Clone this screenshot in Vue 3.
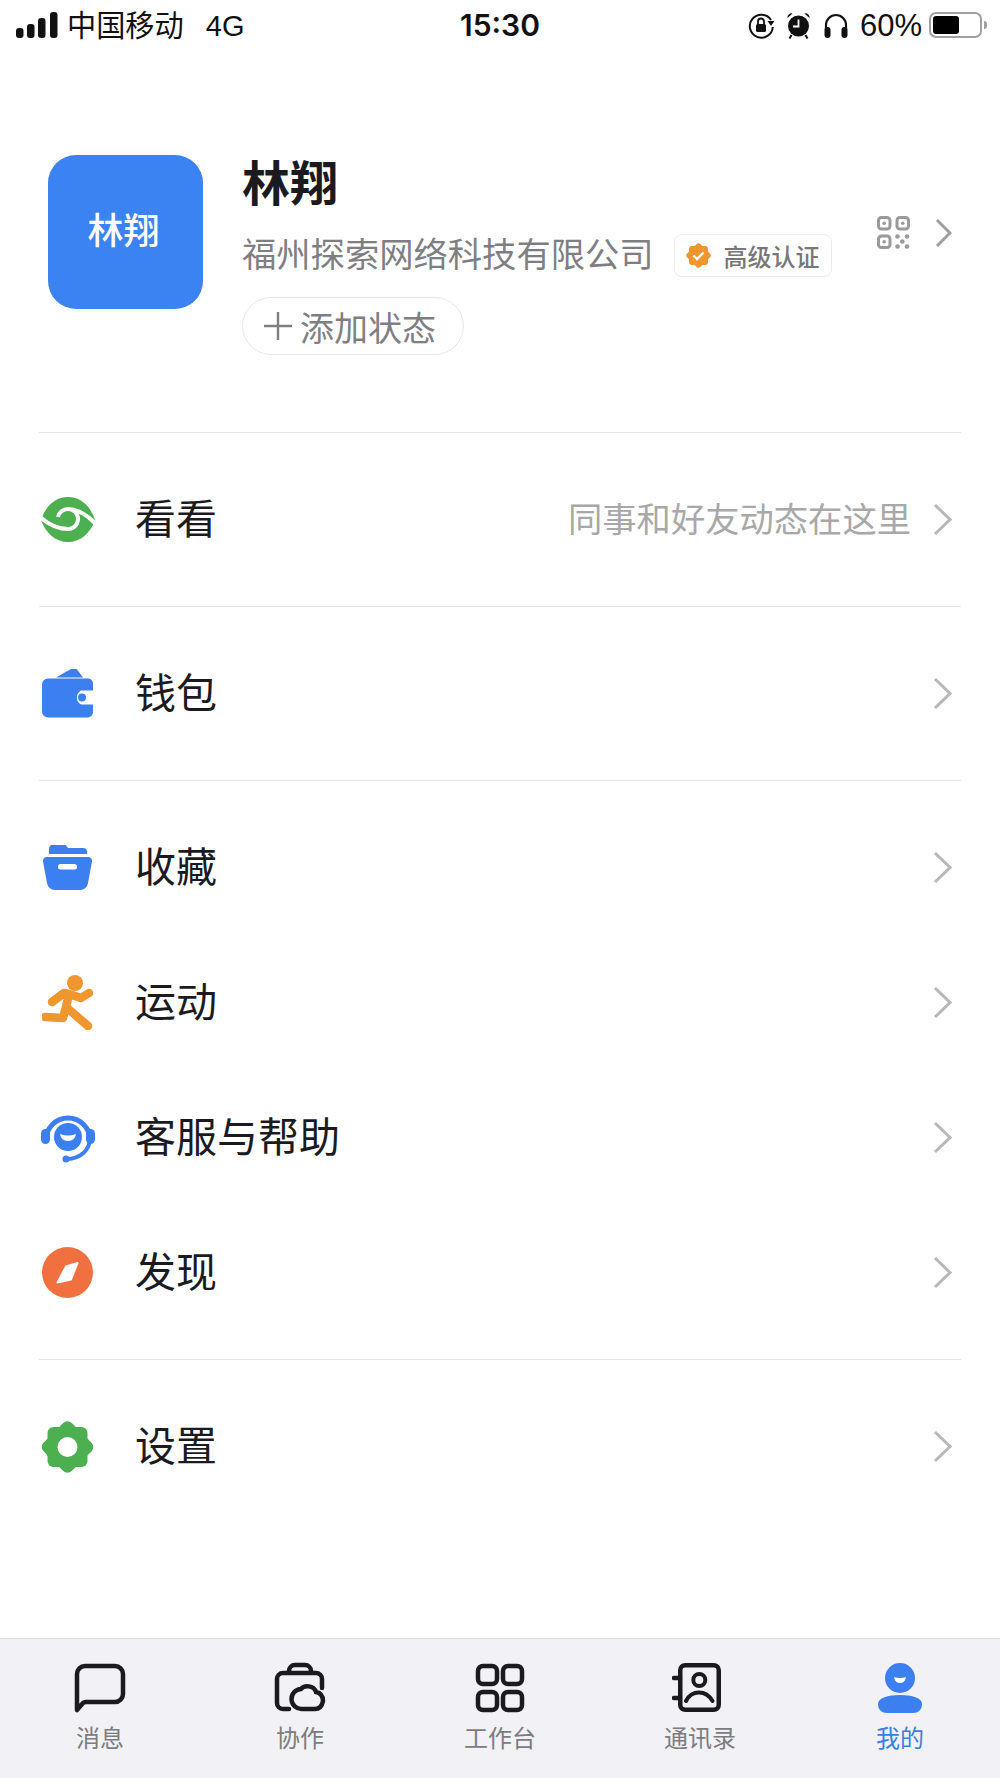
<template>
  <div class="page">
    <div class="status-bar">
      <div class="status-left">
        <svg class="signal" width="42" height="26" viewBox="0 0 42 26">
          <rect x="0" y="16" width="7.5" height="10" rx="3" />
          <rect x="11" y="12" width="7.5" height="14" rx="3" />
          <rect x="22" y="6" width="7.5" height="20" rx="3" />
          <rect x="34" y="0" width="7.5" height="26" rx="3" />
        </svg>
        <span class="carrier">中国移动</span>
        <span class="network">4G</span>
      </div>
      <div class="status-time">15:30</div>
      <div class="status-right">
        <svg width="27" height="27" viewBox="0 0 27 27">
          <path d="M23 8A11.5 11.5 0 1 0 24.8 15" fill="none" stroke="#111" stroke-width="2" />
          <path d="M19.5 9h7l-3.5 5z" fill="#111" />
          <rect x="8" y="12" width="10" height="8" rx="1.5" fill="#111" />
          <path d="M10 12V9.5a3 3 0 0 1 6 0V12" fill="none" stroke="#111" stroke-width="1.8" />
        </svg>
        <svg class="alarm" width="25" height="27" viewBox="0 0 24 27">
          <circle cx="12" cy="14" r="10.5" fill="#111" />
          <path d="M1 6a4 4 0 0 1 5-4.500zM23 6a4 4 0 0 0-5-4.500z" fill="#111" />
          <path d="M5 23l-2 3.500M19 23l2 3.500" stroke="#111" stroke-width="2" />
          <path d="M12 7.500V14.500H6.500" fill="none" stroke="#fff" stroke-width="1.800" />
        </svg>
        <svg class="headphones" width="24" height="25" viewBox="0 0 24 25">
          <path d="M2 17V12a10 10 0 0 1 20 0v5" fill="none" stroke="#111" stroke-width="2.200" />
          <rect x="0.500" y="14" width="6" height="11" rx="3" fill="#111" />
          <rect x="17.500" y="14" width="6" height="11" rx="3" fill="#111" />
        </svg>
        <span class="percent">60%</span>
        <div class="battery"><div class="battery-level"></div></div>
        <div class="battery-nub"></div>
      </div>
    </div>

    <div class="profile">
      <div class="avatar"><span>林翔</span></div>
      <div class="profile-info">
        <div class="name">林翔</div>
        <div class="company-row">
          <span class="company">福州探索网络科技有限公司</span>
          <span class="badge">
            <svg width="25" height="25" viewBox="0 0 25 25">
              <g fill="#f0962f">
                <rect x="3" y="3" width="19" height="19" rx="3" />
                <rect x="3" y="3" width="19" height="19" rx="3" transform="rotate(45 12.500 12.500)" />
              </g>
              <path d="M7.500 12.500l3.500 3.500 6.500-6.500" fill="none" stroke="#fff" stroke-width="2.400" />
            </svg>
            <span>高级认证</span>
          </span>
        </div>
        <div class="status-pill">
          <svg width="28" height="28" viewBox="0 0 28 28">
            <path d="M14 0v28M0 14h28" stroke="#7f7f83" stroke-width="2.400" />
          </svg>
          <span>添加状态</span>
        </div>
      </div>
      <div class="profile-actions">
        <svg width="33" height="33" viewBox="0 0 33 33">
          <g fill="none" stroke="#9a9a9a" stroke-width="3">
            <rect x="1.500" y="1.500" width="11.500" height="11.500" rx="3" />
            <rect x="20" y="1.500" width="11.500" height="11.500" rx="3" />
            <rect x="1.500" y="20" width="11.500" height="11.500" rx="3" />
          </g>
          <g fill="#9a9a9a">
            <circle cx="7.200" cy="7.200" r="1.800" />
            <circle cx="25.800" cy="7.200" r="1.800" />
            <circle cx="7.200" cy="25.800" r="1.800" />
            <circle cx="20.500" cy="20.500" r="2.300" />
            <circle cx="30" cy="20.500" r="2.300" />
            <circle cx="25.300" cy="25.500" r="2.300" />
            <circle cx="20.500" cy="30.500" r="2.300" />
            <circle cx="30" cy="30.500" r="2.300" />
          </g>
        </svg>
        <svg class="chevron" width="17" height="30" viewBox="0 0 17 30">
          <path d="M2 2l13 13L2 28" fill="none" stroke="#9f9f9f" stroke-width="3" />
        </svg>
      </div>
    </div>

    <div class="menu">
      <div v-for="(group, i) in groups" :key="i" class="menu-group">
        <div v-for="item in group" :key="item.label" class="menu-row">
          <div class="menu-icon">
            <svg v-if="item.icon === 'eye'" width="54" height="45" viewBox="0 0 54 45">
              <path d="M0 23C5 8 15 0 27 0s22 8 27 23c-5 14-15 22-27 22S5 37 0 23z" fill="#4caf50" />
              <path d="M-1 20C7 27 16 32 27 32a10 10 0 0 0 0-20C36 12 46 18 55 27" fill="none" stroke="#fff" stroke-width="4" />
              <path d="M27 12a10 10 0 0 0-10 8" fill="none" stroke="#fff" stroke-width="4" />
              <circle cx="27" cy="22" r="5" fill="#4caf50" />
            </svg>
            <svg v-else-if="item.icon === 'wallet'" width="51" height="49" viewBox="0 1.500 51 49">
              <path d="M14 10L29 1.500c2.500-1.500 5-1 6.500 1L41 10z" fill="#3b7ff0" />
              <path d="M6 11h40a5 5 0 0 1 5 5v7H39a8 8 0 0 0 0 14h12v7a6 6 0 0 1-5 6H6a6 6 0 0 1-6-6V17a6 6 0 0 1 6-6z" fill="#3b7ff0" />
              <circle cx="40" cy="30" r="4" fill="#3b7ff0" />
            </svg>
            <svg v-else-if="item.icon === 'folder'" width="49" height="46" viewBox="0 1 49 46">
              <path d="M6 10V5a5 5 0 0 1 5-5h8c3 0 4 1 6 4h15a4 4 0 0 1 4 4v2z" fill="#3b7ff0" />
              <path d="M4 13h41a4 4 0 0 1 4 4.500L45 39a8 8 0 0 1-8 7H12a8 8 0 0 1-8-7L0 17.500A4 4 0 0 1 4 13z" fill="#3b7ff0" />
              <rect x="15" y="20" width="19" height="5.500" rx="2.500" fill="#fff" />
            </svg>
            <svg v-else-if="item.icon === 'run'" width="51" height="55" viewBox="0 0 51 55">
              <circle cx="33" cy="8" r="8" fill="#f0962f" />
              <path d="M10 27L22 18L27 19L39 23L47 18M27 19L24 32M3 42L21 43L24 32L46 51" fill="none" stroke="#f0962f" stroke-width="8.500" stroke-linecap="round" stroke-linejoin="round" />
            </svg>
            <svg v-else-if="item.icon === 'support'" width="54" height="51" viewBox="0 0 54 51">
              <path d="M5 28a22 22 0 0 1 44 0" fill="none" stroke="#3b7ff0" stroke-width="5" />
              <path d="M49 26c0 12-10 21-23 21" fill="none" stroke="#3b7ff0" stroke-width="4" stroke-linecap="round" />
              <circle cx="27" cy="25" r="14" fill="#3b7ff0" />
              <path d="M19 22q8 3 16 0q-1 7-8 7q-7 0-8-7z" fill="#fff" />
              <rect x="0" y="17" width="9" height="15" rx="4.500" fill="#3b7ff0" />
              <rect x="45" y="17" width="9" height="15" rx="4.500" fill="#3b7ff0" />
              <circle cx="25" cy="47" r="3.500" fill="#3b7ff0" />
            </svg>
            <svg v-else-if="item.icon === 'compass'" width="51" height="51" viewBox="0 0 51 51">
              <circle cx="25.500" cy="25.500" r="25.500" fill="#f1703f" />
              <path d="M35.500 16L24 19.500L15.500 35.500L29 32.500Z" fill="#fff" stroke="#fff" stroke-width="2" stroke-linejoin="round" />
            </svg>
            <svg v-else-if="item.icon === 'gear'" width="53" height="52" viewBox="0 0 53 52">
              <g fill="#4caf50">
                <rect x="6.500" y="6" width="40" height="40" rx="6" />
                <rect x="6.500" y="6" width="40" height="40" rx="6" transform="rotate(45 26.500 26)" />
              </g>
              <circle cx="26.500" cy="26" r="10" fill="#fff" />
            </svg>
          </div>
          <span class="menu-label">{{ item.label }}</span>
          <span v-if="item.hint" class="menu-hint">{{ item.hint }}</span>
          <svg class="row-chevron" width="19" height="33" viewBox="0 0 19 33">
            <path d="M2 2l15 14.500L2 31" fill="none" stroke="#b8b8b8" stroke-width="3" />
          </svg>
        </div>
      </div>
    </div>

    <div class="tab-bar">
      <div v-for="tab in tabs" :key="tab.label" class="tab" :class="{ active: tab.active }">
        <svg v-if="tab.icon === 'msg'" width="52" height="52" viewBox="0 0 52 52">
          <path d="M3 45V12a8 8 0 0 1 8-8h30a8 8 0 0 1 8 8v20a8 8 0 0 1-8 8H12a4 4 0 0 0-3 1l-6 7z" fill="none" stroke="#1b1b1f" stroke-width="4.500" stroke-linejoin="round" />
        </svg>
        <svg v-else-if="tab.icon === 'collab'" width="52" height="52" viewBox="0 0 52 52">
          <path d="M15 11V9a6 6 0 0 1 6-6h10a6 6 0 0 1 6 6v2" fill="none" stroke="#1b1b1f" stroke-width="4.500" />
          <path d="M15 47H9a6 6 0 0 1-6-6V17a6 6 0 0 1 6-6h33a6 6 0 0 1 6 6v9" fill="none" stroke="#1b1b1f" stroke-width="4.500" stroke-linecap="round" />
          <path d="M28 47a10 10 0 0 1-1-20c3-4 13-4 15 3 5 1 7 5 7 9-1 5-4 8-8 8z" fill="none" stroke="#1b1b1f" stroke-width="4.500" />
        </svg>
        <svg v-else-if="tab.icon === 'apps'" width="50" height="52" viewBox="0 0 50 52">
          <g fill="none" stroke="#1b1b1f" stroke-width="4.500">
            <rect x="3" y="4" width="19" height="18" rx="5" />
            <rect x="28" y="4" width="19" height="18" rx="5" />
            <rect x="3" y="30" width="19" height="18" rx="5" />
            <rect x="28" y="30" width="19" height="18" rx="5" />
          </g>
        </svg>
        <svg v-else-if="tab.icon === 'contacts'" width="56" height="52" viewBox="0 0 56 52">
          <rect x="8.250" y="3.250" width="38.500" height="44.500" rx="5" fill="none" stroke="#1b1b1f" stroke-width="4.500" />
          <circle cx="27.300" cy="18" r="6" fill="none" stroke="#1b1b1f" stroke-width="4" />
          <path d="M14 39c3-6 8-8.500 13-8.500s10 2.500 13.500 8.500" fill="none" stroke="#1b1b1f" stroke-width="4" stroke-linecap="round" />
          <path d="M2 16h6M2 36h6" stroke="#1b1b1f" stroke-width="4.500" stroke-linecap="round" />
        </svg>
        <svg v-else width="50" height="52" viewBox="0 0 50 52">
          <circle cx="25" cy="16" r="15" fill="#3b7ff0" />
          <path d="M19 15q6 2 12 0q-1 6-6 6q-5 0-6-6z" fill="#fff" />
          <path d="M3 42c0-6 10-9 22-9s22 3 22 9c0 6-4 9-9 9H12c-5 0-9-3-9-9z" fill="#3b7ff0" />
        </svg>
        <span class="tab-label">{{ tab.label }}</span>
      </div>
    </div>
  </div>
</template>

<script setup>
const groups = [
  [{ icon: 'eye', label: '看看', hint: '同事和好友动态在这里' }],
  [{ icon: 'wallet', label: '钱包' }],
  [
    { icon: 'folder', label: '收藏' },
    { icon: 'run', label: '运动' },
    { icon: 'support', label: '客服与帮助' },
    { icon: 'compass', label: '发现' }
  ],
  [{ icon: 'gear', label: '设置' }]
]

const tabs = [
  { icon: 'msg', label: '消息' },
  { icon: 'collab', label: '协作' },
  { icon: 'apps', label: '工作台' },
  { icon: 'contacts', label: '通讯录' },
  { icon: 'me', label: '我的', active: true }
]
</script>

<style>
html,
body {
  margin: 0;
  background: #fff;
}
</style>

<style scoped>
.page {
  width: 1000px;
  height: 1778px;
  display: flex;
  flex-direction: column;
  background: #fff;
  font-family: "Liberation Sans", "Noto Sans CJK SC", sans-serif;
  overflow: hidden;
}

.status-bar {
  height: 50px;
  display: flex;
  align-items: center;
  justify-content: space-between;
  padding: 0 13px 0 16px;
  color: #111;
  position: relative;
}

.status-left {
  display: flex;
  align-items: center;
}

.signal {
  fill: #111;
}

.carrier {
  margin-left: 9px;
  margin-top: 2px;
  font-size: 29.2px;
  line-height: 36px;
}

.network {
  margin-left: 22px;
  margin-top: 2px;
  font-size: 29px;
  line-height: 36px;
}

.status-time {
  position: absolute;
  left: 0;
  right: 0;
  text-align: center;
  font-family: Inter, "Liberation Sans", sans-serif;
  font-size: 30px;
  font-weight: 600;
  line-height: 36px;
}

.status-right {
  display: flex;
  align-items: center;
}

.alarm {
  margin-left: 11px;
}

.headphones {
  margin-left: 13px;
}

.percent {
  margin-left: 12px;
  margin-top: 1px;
  font-size: 31px;
  line-height: 36px;
}

.battery {
  margin-left: 7px;
  width: 53px;
  height: 26px;
  box-sizing: border-box;
  border: 2px solid #a0a0a0;
  border-radius: 7px;
  padding: 2px;
}

.battery-level {
  width: 26px;
  height: 100%;
  background: #000;
  border-radius: 3px;
}

.battery-nub {
  margin-left: 2px;
  width: 3px;
  height: 8px;
  background: #a0a0a0;
  border-radius: 0 3px 3px 0;
}

.profile {
  display: flex;
  align-items: flex-start;
  padding: 105px 48px 77px;
}

.avatar {
  width: 155px;
  height: 154px;
  flex-shrink: 0;
  display: flex;
  align-items: center;
  justify-content: center;
  background: #3b82f3;
  border-radius: 28px;
  color: #fff;
  font-size: 36px;
  font-weight: 500;
  line-height: 44px;
}

.avatar span {
  margin-right: 4px;
}

.profile-info {
  flex: 1;
  margin-left: 39px;
}

.name {
  font-size: 48px;
  font-weight: 700;
  line-height: 60px;
  color: #1b1b1f;
}

.company-row {
  margin-top: 15px;
  display: flex;
  align-items: center;
  height: 50px;
}

.company {
  font-size: 34.3px;
  line-height: 50px;
  color: #7f7f83;
  white-space: nowrap;
}

.badge {
  margin-left: 20px;
  height: 43px;
  box-sizing: border-box;
  display: flex;
  align-items: center;
  gap: 13px;
  padding: 0 11px;
  border: 1px solid #ececec;
  border-radius: 8px;
  font-size: 24px;
  font-weight: 500;
  color: #77777b;
  white-space: nowrap;
}

.status-pill {
  margin-top: 17px;
  width: 222px;
  height: 58px;
  box-sizing: border-box;
  display: flex;
  align-items: center;
  gap: 8px;
  padding-left: 21px;
  border: 1px solid #e8e8e8;
  border-radius: 29px;
  font-size: 34px;
  color: #7f7f83;
}

.profile-actions {
  margin-top: 61px;
  display: flex;
  align-items: center;
  gap: 25px;
}

.menu {
  flex: 1;
}

.menu-group {
  border-top: 1px solid #e6e6e6;
  margin: 0 39px;
  padding: 19px 0;
}

.menu-row {
  height: 135px;
  display: flex;
  align-items: center;
}

.menu-icon {
  width: 57px;
  flex-shrink: 0;
  display: flex;
  justify-content: center;
}

.menu-label {
  margin-left: 39px;
  font-size: 41px;
  line-height: 50px;
  color: #1b1b1f;
}

.menu-hint {
  margin-left: auto;
  font-size: 34.3px;
  line-height: 50px;
  color: #a8a8a8;
}

.row-chevron {
  margin-left: 22px;
  margin-right: 9px;
}

.menu-label + .row-chevron {
  margin-left: auto;
}

.tab-bar {
  height: 140px;
  box-sizing: border-box;
  display: flex;
  background: #f1f1f6;
  border-top: 1px solid #dedee2;
  padding-top: 23px;
}

.tab {
  flex: 1;
  display: flex;
  flex-direction: column;
  align-items: center;
}

.tab-label {
  margin-top: 9px;
  font-size: 24px;
  line-height: 32px;
  color: #7c7c80;
}

.tab.active .tab-label {
  color: #3b7fdc;
}
</style>
